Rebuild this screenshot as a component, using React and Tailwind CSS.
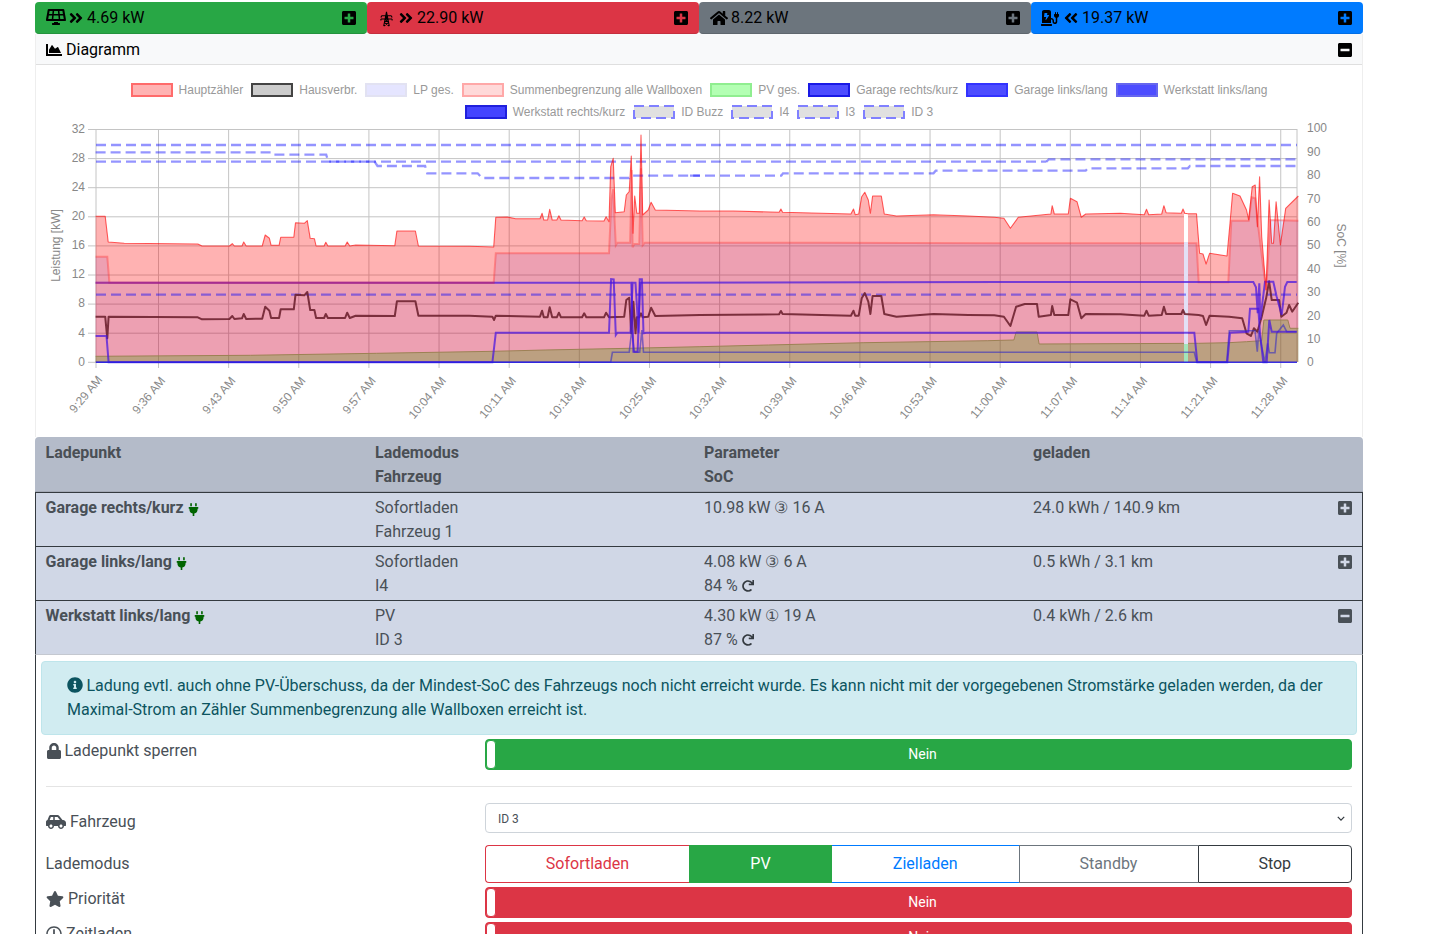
import React from 'react';
import {
  FaSolarPanel, FaAngleDoubleRight, FaAngleDoubleLeft, FaPlusSquare, FaMinusSquare, FaHome,
  FaChargingStation, FaChartArea, FaPlug, FaRedo, FaLock, FaCarSide, FaStar, FaInfoCircle, FaRegClock,
} from 'react-icons/fa';

// helpers to turn values read off the chart into plot coordinates
const left = (pts) => pts.map(([x, y]) => [40 + x / 2.376, 120 + y / 3]);
const right = (pts) => pts.map(([x, y]) => [690 + x / 2.3, 120 + y / 3]);
const tail = (pts) => pts.map(([x, y]) => [1000 + x / 3, 200 + y / 3]);
const toPath = (pts) => 'M' + pts.map(([x, y]) => `${x.toFixed(1)} ${y.toFixed(1)}`).join('L');
const toArea = (pts) => `${toPath(pts)}L${pts[pts.length - 1][0].toFixed(1)} 362L${pts[0][0].toFixed(1)} 362Z`;

const mainMeter = [
  ...left([[132, 289], [155, 289], [162, 366], [200, 370], [375, 372], [385, 378], [450, 378], [457, 371], [462, 378], [480, 378], [484, 366], [490, 378], [528, 378], [535, 345], [545, 355], [549, 376], [568, 376], [572, 352], [603, 352], [607, 308], [628, 310], [635, 302], [642, 355], [652, 356], [656, 378], [675, 378], [679, 367], [684, 378], [725, 378], [730, 366], [736, 378], [750, 375], [843, 377], [848, 333], [892, 333], [899, 378], [1020, 379], [1078, 381], [1083, 292], [1110, 291], [1130, 296], [1188, 296], [1193, 280], [1197, 300], [1206, 300], [1211, 268], [1217, 300], [1228, 300], [1233, 287], [1238, 300], [1288, 302], [1293, 291], [1298, 302], [1340, 303], [1345, 290], [1352, 305], [1356, 140], [1362, 115], [1367, 278], [1388, 275], [1393, 225], [1400, 215], [1405, 108], [1409, 340], [1413, 228], [1418, 280], [1424, 280], [1428, 45], [1432, 285], [1445, 270], [1452, 247], [1462, 270], [1568, 273]]),
  ...right([[100, 273], [205, 277], [209, 267], [213, 277], [370, 282], [376, 267], [380, 284], [388, 282], [395, 230], [402, 217], [410, 240], [415, 280], [420, 228], [440, 228], [447, 282], [475, 288], [560, 284], [640, 288], [700, 292], [722, 295], [737, 325], [755, 292], [830, 282], [833, 257], [838, 282], [870, 282], [875, 235], [890, 245], [900, 292], [910, 282], [990, 280], [1045, 284], [1050, 268], [1055, 284], [1085, 282], [1090, 257], [1095, 278], [1130, 280], [1134, 267], [1138, 280], [1145, 281], [1165, 281], [1172, 400], [1180, 402], [1187, 432], [1195, 400], [1235, 408], [1242, 310], [1248, 220], [1265, 228], [1280, 270], [1285, 300], [1293, 200], [1300, 195], [1305, 320], [1310, 170], [1315, 350], [1325, 510], [1332, 240], [1338, 370], [1342, 370], [1348, 245], [1358, 375], [1370, 265], [1399, 228]]),
];

const lpTotal = [
  ...left([[132, 410], [160, 410], [165, 488], [1078, 488], [1083, 400], [1352, 400], [1358, 235], [1362, 208], [1368, 376], [1372, 368], [1402, 368], [1406, 150], [1408, 382], [1412, 372], [1424, 372], [1428, 145], [1432, 376], [1437, 368], [1568, 368]]),
  ...right([[300, 368], [700, 370], [1165, 370], [1170, 487], [1238, 487], [1245, 302], [1285, 302], [1292, 232], [1300, 235], [1305, 300], [1325, 510], [1335, 300], [1399, 302]]),
];

const house = [
  ...left([[132, 590], [155, 590], [160, 655], [163, 590], [375, 592], [385, 598], [450, 597], [457, 588], [462, 597], [480, 595], [484, 582], [490, 597], [528, 596], [535, 560], [545, 572], [549, 594], [568, 594], [572, 568], [603, 568], [607, 524], [628, 526], [635, 516], [642, 570], [652, 570], [656, 594], [675, 594], [679, 582], [684, 594], [725, 594], [730, 578], [736, 594], [750, 587], [843, 588], [848, 544], [892, 544], [899, 587], [1020, 587], [1075, 590], [1079, 600], [1083, 587], [1188, 590], [1193, 572], [1197, 592], [1206, 592], [1211, 562], [1217, 592], [1228, 592], [1233, 578], [1238, 592], [1288, 592], [1293, 580], [1298, 592], [1340, 592], [1345, 578], [1352, 592], [1388, 590], [1393, 540], [1400, 533], [1405, 640], [1410, 545], [1415, 640], [1418, 592], [1424, 592], [1428, 580], [1432, 592], [1445, 590], [1452, 563], [1462, 588], [1568, 585]]),
  ...right([[205, 583], [209, 573], [213, 582], [370, 587], [376, 572], [380, 587], [388, 587], [395, 535], [402, 519], [410, 545], [415, 582], [420, 528], [440, 528], [447, 582], [475, 590], [560, 582], [640, 585], [700, 586], [722, 590], [737, 618], [750, 560], [770, 552], [798, 552], [802, 590], [830, 585], [833, 558], [838, 585], [870, 585], [875, 538], [890, 548], [900, 595], [910, 582], [990, 583], [1045, 587], [1050, 572], [1055, 587], [1085, 585], [1090, 560], [1095, 582], [1130, 582], [1134, 570], [1138, 582], [1170, 585], [1180, 588], [1187, 615], [1195, 587], [1240, 590], [1270, 595], [1280, 640], [1290, 648], [1297, 625], [1305, 635], [1315, 590], [1325, 535], [1332, 484], [1338, 540], [1355, 540], [1360, 590], [1372, 578], [1378, 555], [1385, 575], [1399, 548]]),
];

const pvTotal = [
  ...left([[132, 709], [500, 706], [800, 700], [1078, 694], [1200, 690], [1400, 685], [1568, 680]]),
  ...right([[180, 675], [400, 668], [685, 662], [745, 660], [750, 636], [798, 636], [803, 672], [1170, 670], [1240, 668], [1280, 665], [1315, 662], [1320, 600], [1375, 600], [1380, 625], [1399, 625]]),
];

const garageRight = [
  ...left([[132, 488], [1405, 488], [1410, 695], [1420, 695], [1426, 488]]),
  ...tail([[0, 246], [760, 246], [768, 262], [773, 340], [778, 250], [781, 360], [795, 245], [820, 245], [830, 290], [845, 345], [855, 260], [862, 246], [890, 246]]),
];

const garageLeft = [
  ...left([[132, 648], [158, 648], [163, 727], [1075, 727], [1083, 638], [1352, 638], [1357, 477], [1363, 478], [1368, 645], [1372, 638], [1403, 638], [1408, 488], [1415, 488], [1422, 638], [1425, 478], [1430, 478], [1434, 640], [1440, 638]]),
  ...tail([[0, 398], [583, 398], [592, 487], [682, 487], [690, 398], [745, 395], [750, 326], [775, 326], [780, 400], [790, 487], [800, 487], [808, 360], [815, 395], [890, 395]]),
];

const workshopRight = [
  ...left([[132, 727], [1356, 727], [1360, 697], [1400, 697], [1406, 630], [1412, 697], [1425, 697], [1430, 630], [1434, 697]]),
  ...tail([[0, 457], [583, 457], [590, 487], [680, 487], [688, 392], [765, 392], [772, 455], [776, 392], [785, 440], [795, 487], [803, 430], [808, 458], [825, 458], [830, 400], [850, 375], [860, 395], [890, 395]]),
];

const socLines = [
  left([[132, 97], [552, 97]]),
  left([[557, 104], [680, 104], [685, 125], [795, 125], [802, 138], [915, 138], [920, 160], [1040, 160], [1050, 174], [1400, 174], [1404, 167], [1568, 167]]),
  right([[0, 167], [210, 167], [214, 160], [560, 160], [565, 152], [910, 152], [915, 145], [1145, 145], [1150, 138], [1399, 138]]),
  right([[820, 125], [825, 118], [1399, 118]]),
];

const xLabels = ['9:36 AM', '9:43 AM', '9:50 AM', '9:57 AM', '10:04 AM', '10:11 AM', '10:18 AM', '10:25 AM', '10:32 AM', '10:39 AM', '10:46 AM', '10:53 AM', '11:00 AM', '11:07 AM', '11:14 AM', '11:21 AM', '11:28 AM'];
const xTicks = xLabels.map((label, i) => ({ label, x: 158.5 + i * 70.14 }));
const kwTicks = [32, 28, 24, 20, 16, 12, 8, 4, 0];
const socTicks = [100, 90, 80, 70, 60, 50, 40, 30, 20, 10, 0];

const Swatch = ({ bg, border, dashed }) => (
  <svg width="42" height="14" className="shrink-0">
    <rect x="1" y="1" width="40" height="12" fill={bg} stroke={border} strokeWidth="2" strokeDasharray={dashed ? '10 5' : undefined} />
  </svg>
);

const legendOne = [
  ['Hauptzähler', '#ffb3b3', '#ff6b6b'],
  ['Hausverbr.', '#cccccc', '#444444'],
  ['LP ges.', '#e5e5ff', '#e2e2f2'],
  ['Summenbegrenzung alle Wallboxen', '#ffd9d9', '#ffa8a8'],
  ['PV ges.', '#b3ffb3', '#90ee90'],
  ['Garage rechts/kurz', '#4d4dff', '#1a1ae6'],
  ['Garage links/lang', '#4d4dff', '#3333ff'],
  ['Werkstatt links/lang', '#4d4dff', '#6666ee'],
];
const legendTwo = [
  ['Werkstatt rechts/kurz', '#4444ff', '#2020dd'],
  ['ID Buzz', '#e0e0e0', '#8080ff', true],
  ['I4', '#e0e0e0', '#8080ff', true],
  ['I3', '#e0e0e0', '#8080ff', true],
  ['ID 3', '#e0e0e0', '#8080ff', true],
];

const LegendRow = ({ items }) => (
  <div className="flex justify-center gap-[8px] h-[22px] items-center">
    {items.map(([label, bg, border, dashed]) => (
      <div key={label} className="flex items-center gap-[6px]">
        <Swatch bg={bg} border={border} dashed={dashed} />
        <span className="whitespace-nowrap">{label}</span>
      </div>
    ))}
  </div>
);

const GridTower = () => (
  <svg viewBox="0 0 16 20" className="w-[13px] h-[16px] mt-[3px] ml-[3px]" fill="none" stroke="currentColor" strokeWidth="1.3">
    <path d="M8 1 L4.5 19 M8 1 L11.5 19 M2 6 H14 M1 10 H15 M2 6 L1 8 M14 6 L15 8 M1 10 L1 12 M15 10 L15 12 M6.5 6 L9.8 10 M9.5 6 L6.2 10 M6 10 L10.6 14.5 M10 10 L5.4 14.5 M5.4 14.5 L11.4 19 M10.6 14.5 L4.6 19" />
  </svg>
);

const Chart = () => (
  <svg viewBox="36 123 1326 314" className="block w-[1326px] h-[314px] overflow-visible" fontFamily="'Liberation Sans', Arial, sans-serif" fontSize="12" fill="#888">
    {kwTicks.map((kw, i) => (
      <g key={kw}>
        <line x1="88" x2="1297" y1={129.5 + i * 29.1} y2={129.5 + i * 29.1} stroke="#c4c4c4" />
        <text x="85" y={132.5 + i * 29.15} textAnchor="end">{kw}</text>
      </g>
    ))}
    <line x1="96" x2="96" y1="129" y2="368" stroke="#c4c4c4" />
    <line x1="1297" x2="1297" y1="129" y2="362" stroke="#c4c4c4" />
    <text transform="translate(60 245.5) rotate(-90)" textAnchor="middle">Leistung [kW]</text>
    <text transform="translate(1337 245.5) rotate(90)" textAnchor="middle">SoC [%]</text>
    {socTicks.map((soc, i) => (
      <text key={soc} x="1307" y={132.3 + i * 23.4}>{soc}</text>
    ))}
    <text transform="translate(103 380) rotate(-50)" textAnchor="end">9:29 AM</text>
    {xTicks.map(({ label, x }) => (
      <g key={label}>
        <line x1={x} x2={x} y1="129" y2="368" stroke="#c4c4c4" />
        <text transform={`translate(${x + 7.5} 381) rotate(-50)`} textAnchor="end">{label}</text>
      </g>
    ))}

    <path d={toArea(pvTotal)} fill="rgba(0,255,0,0.3)" />
    <path d={toPath(pvTotal)} fill="none" stroke="#7fcf6a" strokeWidth="1" />
    <path d={toArea(lpTotal)} fill="rgba(0,0,255,0.1)" />
    <path d={toArea(mainMeter)} fill="rgba(255,0,0,0.3)" />
    <path d={toPath(lpTotal)} fill="none" stroke="rgba(255,40,40,0.35)" strokeWidth="2" />
    <rect x="1184" y="214" width="4" height="28" fill="#ffffff" />
    <rect x="1184" y="242" width="4" height="102" fill="#e3e0f6" />
    <rect x="1184" y="344" width="4" height="18" fill="#a2e5ba" />

    <g fill="none" stroke="rgba(0,0,255,0.42)" strokeWidth="2.3" strokeDasharray="10 5">
      <path d="M96 145H1297" />
      <path d={`M96 161.7H${690 + 820 / 2.3}`} />
      {socLines.map((pts, i) => <path key={i} d={toPath(pts)} />)}
      <path d="M96 294.7H1297" />
    </g>
    <path d={toPath(house)} fill="none" stroke="#6e2230" strokeWidth="2" strokeLinejoin="round" opacity="0.9" />
    <path d={toPath(workshopRight)} fill="none" stroke="rgba(60,50,190,0.62)" strokeWidth="1.6" />
    <path d={toPath(garageLeft)} fill="none" stroke="rgba(70,20,225,0.72)" strokeWidth="2" />
    <path d={toPath(garageRight)} fill="none" stroke="rgba(70,20,225,0.72)" strokeWidth="2" />
    <path d={toPath(left([[132, 488], [1080, 488]]))} fill="none" stroke="rgba(255,40,40,0.35)" strokeWidth="2" />
    <path d="M96 362.3H1297" fill="none" stroke="rgba(40,30,225,0.9)" strokeWidth="1.6" />
    <path d={toPath(mainMeter)} fill="none" stroke="rgba(255,0,0,0.62)" strokeWidth="1.1" strokeLinejoin="round" />
  </svg>
);

const PowerCard = ({ color, icons, value }) => (
  <div className={`flex-1 h-8 rounded flex items-center pl-[10px] pr-[10px] text-black border-b ${color}`}>
    {icons}
    <span className="ml-[3px]">{value}</span>
    <FaPlusSquare className="ml-auto text-[16px] mr-0" />
  </div>
);

const rows = [
  { name: 'Garage rechts/kurz', mode: 'Sofortladen', car: 'Fahrzeug 1', param: '10.98 kW ③ 16 A', soc: null, charged: '24.0 kWh / 140.9 km', open: false },
  { name: 'Garage links/lang', mode: 'Sofortladen', car: 'I4', param: '4.08 kW ③ 6 A', soc: '84 %', charged: '0.5 kWh / 3.1 km', open: false },
  { name: 'Werkstatt links/lang', mode: 'PV', car: 'ID 3', param: '4.30 kW ① 19 A', soc: '87 %', charged: '0.4 kWh / 2.6 km', open: true },
];

const Toggle = ({ color, handleBorder }) => (
  <div className={`relative h-[31px] rounded flex items-center justify-center pl-[8px] pb-px text-white text-sm border ${color}`}>
    <span className={`absolute left-0 top-0 bottom-0 w-[10px] bg-white rounded border ${handleBorder}`} />
    Nein
  </div>
);

const modes = [
  { label: 'Sofortladen', width: 'w-[204px]', cls: 'border border-r-0 border-[#dc3545] text-[#dc3545] rounded-l' },
  { label: 'PV', width: 'w-[143px]', cls: 'bg-[#28a745] text-white' },
  { label: 'Zielladen', width: 'w-[186.5px]', cls: 'border-y border-[#007bff] text-[#007bff]' },
  { label: 'Standby', width: 'w-[179px]', cls: 'border border-r-0 border-[#6c757d] text-[#6c757d]' },
  { label: 'Stop', width: 'flex-1', cls: 'border border-[#343a40] text-[#343a40] rounded-r' },
];

const App = () => (
  <div className="h-[934px] overflow-hidden bg-white text-[16px] leading-6 text-[#495057]" style={{ fontFamily: "Roboto, 'Liberation Sans', sans-serif" }}>
    <div className="ml-[35px] w-[1328px] pt-[2px]">
      <div className="flex">
        <PowerCard color="bg-[#28a745] border-[#23933d]" value="4.69 kW" icons={<><FaSolarPanel className="text-[20px] -mt-[2px] ml-px" /><FaAngleDoubleRight className="text-[16px] ml-[2px]" /></>} />
        <PowerCard color="bg-[#dc3545] border-[#c52f3e]" value="22.90 kW" icons={<><GridTower /><FaAngleDoubleRight className="text-[16px] ml-[5px]" /></>} />
        <PowerCard color="bg-[#6c757d] border-[#5f676e]" value="8.22 kW" icons={<FaHome className="text-[18px] ml-px" />} />
        <PowerCard color="bg-[#007bff] border-[#006ee6]" value="19.37 kW" icons={<><FaChargingStation className="text-[18px]" /><FaAngleDoubleLeft className="text-[16px] ml-[4px]" /></>} />
      </div>

      <div className="border-x border-[#eeeeee]">
        <div className="h-[31px] bg-[#f8f9fa] border-b border-[#dfdfdf] flex items-center pl-[10px] pr-[9px] pt-px text-black">
          <FaChartArea className="text-[16px] mr-1" />
          <span>Diagramm</span>
          <FaMinusSquare className="ml-auto text-[16px]" />
        </div>
        <div className="pt-[14px] text-[12px] leading-none text-[#999999]" style={{ fontFamily: "'Liberation Sans', Arial, sans-serif" }}>
          <LegendRow items={legendOne} />
          <LegendRow items={legendTwo} />
        </div>
        <Chart />
      </div>

      <div className="h-[55px] bg-[#b4bbc9] rounded-t border-b border-[#a3a9b6] grid grid-cols-[329.5px_329px_329px_1fr] pl-[10.5px] pr-[10px] pt-[4px] font-bold text-[#4a4f55]">
        <div>Ladepunkt</div>
        <div>Lademodus<br />Fahrzeug</div>
        <div>Parameter<br />SoC</div>
        <div>geladen</div>
      </div>

      {rows.map((row) => (
        <div key={row.name} className="h-[54px] bg-[#d0d7e6] border border-b-0 border-[#343a40] grid grid-cols-[329.5px_329px_329px_1fr] pl-[9.5px] pr-[9px] pt-[3px] relative">
          <div className="font-bold flex items-start gap-[3px]">
            <span>{row.name}</span>
            <FaPlug className="text-[#006400] text-[13px] mt-[7px]" />
          </div>
          <div>{row.mode}<br />{row.car}</div>
          <div>
            {row.param}
            {row.soc && <div className="flex items-center gap-1">{row.soc}<FaRedo className="text-[12px] text-[#343a40]" /></div>}
          </div>
          <div>{row.charged}</div>
          {row.open
            ? <FaMinusSquare className="absolute right-[9px] top-[7px] text-[16px] text-[#495057]" />
            : <FaPlusSquare className="absolute right-[9px] top-[7px] text-[16px] text-[#495057]" />}
        </div>
      ))}

      <div className="border-x border-[#343a40] border-t border-t-[#c4c8d0] px-[5px] pt-[6px]">
        <div className="h-[74px] bg-[#d1ecf1] border border-[#bee5eb] rounded px-[25px] py-3 text-[#0c5460]">
          <FaInfoCircle className="inline text-[16px] mr-[3.5px] -mt-[3px]" />
          Ladung evtl. auch ohne PV-Überschuss, da der Mindest-SoC des Fahrzeugs noch nicht erreicht wurde. Es kann nicht mit der vorgegebenen Stromstärke geladen werden, da der Maximal-Strom an Zähler Summenbegrenzung alle Wallboxen erreicht ist.
        </div>

        <div className="pl-[4.5px] pr-[5px]">
          <div className="grid grid-cols-[439.5px_1fr] mt-1 h-[48px] border-b border-[#e4e4e4]">
            <div className="flex items-center gap-[3px] h-[24px]"><FaLock className="text-[16px]" /> Ladepunkt sperren</div>
            <Toggle color="bg-[#28a745] border-[#28a745]" handleBorder="border-[#28a745]" />
          </div>
          <div className="grid grid-cols-[439.5px_1fr] mt-4 h-[42px]">
            <div className="flex items-center gap-[4.5px] h-[38px]"><FaCarSide className="text-[20px]" /> Fahrzeug</div>
            <div className="h-[30px] border border-[#ced4da] rounded flex items-center justify-between pl-3 pr-[6px] pt-px text-[12px] leading-none">
              ID 3
              <svg viewBox="0 0 10 6" className="w-[8px] h-[5px]" fill="none" stroke="#343a40" strokeWidth="1.6"><path d="M1 1l4 4 4-4" /></svg>
            </div>
          </div>
          <div className="grid grid-cols-[439.5px_1fr] h-[42px]">
            <div className="h-[38px] flex items-center">Lademodus</div>
            <div className="flex h-[38px]">
              {modes.map((m) => (
                <div key={m.label} className={`${m.width} flex items-center justify-center ${m.cls}`}>{m.label}</div>
              ))}
            </div>
          </div>
          <div className="grid grid-cols-[439.5px_1fr] h-[35px]">
            <div className="flex items-center gap-[4.5px] h-[24px]"><FaStar className="text-[18px]" /> Priorität</div>
            <Toggle color="bg-[#dc3545] border-[#dc3545]" handleBorder="border-[#dc3545]" />
          </div>
          <div className="grid grid-cols-[439.5px_1fr] h-[35px]">
            <div className="flex items-center gap-[4.5px] h-[24px]"><FaRegClock className="text-[16px]" /> Zeitladen</div>
            <Toggle color="bg-[#dc3545] border-[#dc3545]" handleBorder="border-[#dc3545]" />
          </div>
        </div>
      </div>
    </div>
  </div>
);

export default App;
